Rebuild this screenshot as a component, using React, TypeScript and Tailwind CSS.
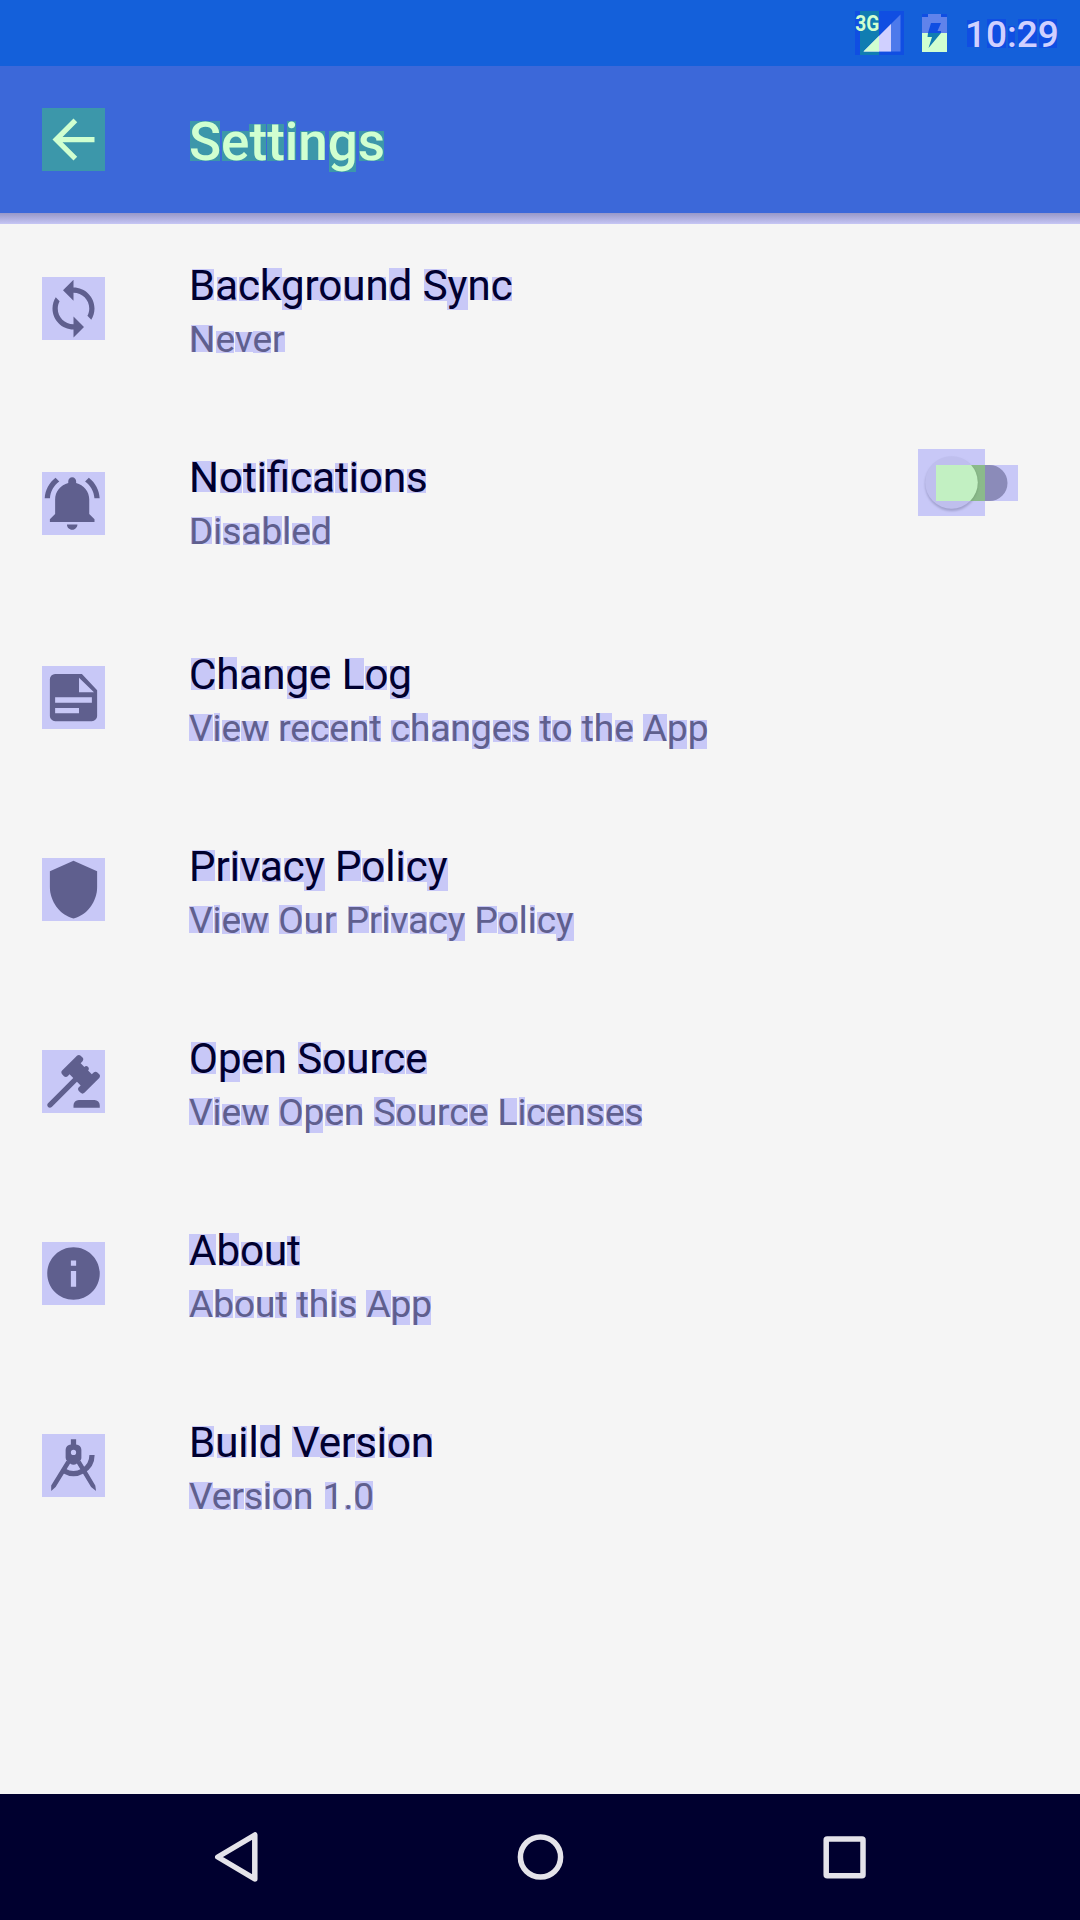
import type { CSSProperties, ReactNode } from "react";

const ctx = document.createElement("canvas").getContext("2d")!;

/** Measuring at a larger size gives fractional, unhinted glyph bounds. */
const PRECISION = 16;

/** Paints a tinted rectangle behind the ink bounds of every glyph. */
function glyphBackground(text: string, size: number, weight: number, tint: string): CSSProperties {
  ctx.font = `${weight} ${size}px Roboto`;
  const ascent = Math.round(ctx.measureText("x").fontBoundingBoxAscent);
  ctx.font = `${weight} ${size * PRECISION}px Roboto`;
  const images: string[] = [];
  const sizes: string[] = [];
  const positions: string[] = [];
  const clusters = text.match(/fi|./g) ?? [];
  let prefix = "";
  for (const glyph of clusters) {
    const m = ctx.measureText(glyph);
    const start = ctx.measureText(prefix + glyph).width - m.width;
    prefix += glyph;
    if (glyph === " ") continue;
    const left = Math.floor((start - m.actualBoundingBoxLeft) / PRECISION + 0.1);
    const right = Math.ceil((start + m.actualBoundingBoxRight) / PRECISION - 0.1);
    const top = ascent - Math.ceil(m.actualBoundingBoxAscent / PRECISION - 0.1);
    const bottom = ascent + Math.ceil(m.actualBoundingBoxDescent / PRECISION - 0.1);
    images.push(`linear-gradient(${tint}, ${tint})`);
    sizes.push(`${right - left}px ${bottom - top}px`);
    positions.push(`${left}px ${top}px`);
  }
  return {
    backgroundImage: images.join(","),
    backgroundSize: sizes.join(","),
    backgroundPosition: positions.join(","),
    backgroundRepeat: "no-repeat",
  };
}

type GlyphTextProps = { text: string; size: number; weight?: number; tint: string; className: string };

function GlyphText({ text, size, weight = 400, tint, className }: GlyphTextProps) {
  return (
    <span className={`block w-max whitespace-pre ${className}`} style={glyphBackground(text, size, weight, tint)}>
      {text}
    </span>
  );
}

function IconTile({ children, className }: { children: ReactNode; className: string }) {
  return (
    <div className={`size-[63px] shrink-0 ${className}`}>
      <svg viewBox="0 0 24 24" className="size-full" fill="currentColor">
        {children}
      </svg>
    </div>
  );
}

const syncIcon = (
  <path d="M12 4V1L8 5l4 4V6c3.31 0 6 2.69 6 6 0 1.01-.25 1.97-.7 2.8l1.46 1.46C19.54 15.03 20 13.57 20 12c0-4.42-3.58-8-8-8zm0 14c-3.31 0-6-2.69-6-6 0-1.01.25-1.97.7-2.8L5.24 7.74C4.46 8.97 4 10.43 4 12c0 4.42 3.58 8 8 8v3l4-4-4-4v3z" />
);
const bellIcon = (
  <path d="M6.58 3.58L5.15 2.15C2.76 3.97 1.18 6.8 1.03 10h2c.15-2.65 1.51-4.97 3.55-6.42zM19.97 10h2c-.15-3.2-1.73-6.03-4.13-7.85l-1.43 1.43c2.05 1.45 3.41 3.77 3.56 6.42zm-1.97.5c0-3.07-2.13-5.64-5-6.32V3.5c0-.83-.67-1.5-1.5-1.5S10 2.67 10 3.5v.68c-2.87.68-5 3.25-5 6.32V16l-2 2v1h17v-1l-2-2v-5.5zM11.5 22c.14 0 .27-.01.4-.04.65-.13 1.19-.58 1.44-1.18.1-.24.16-.5.16-.78h-4c0 1.1.9 2 2 2z" />
);
const documentIcon = (
  <path
    fillRule="evenodd"
    d="M5 3H15.2L21 9.2V19a2 2 0 0 1-2 2H5a2 2 0 0 1-2-2V5a2 2 0 0 1 2-2zM14.1 4.5V10h5.7zM5 11.9v2.1h14v-2.1zM5 16v2h9.1v-2z"
  />
);
const shieldIcon = <path d="M12 1L3 5v6c0 5.55 3.84 10.74 9 12 5.16-1.26 9-6.45 9-12V5z" />;
const gavelIcon = (
  <path d="M2.3,20.28L11.9,10.68L10.5,9.26L9.78,9.97C9.39,10.36 8.76,10.36 8.37,9.97L7.66,9.26C7.27,8.87 7.27,8.24 7.66,7.85L13.32,2.19C13.71,1.8 14.34,1.8 14.73,2.19L15.44,2.9C15.83,3.29 15.83,3.92 15.44,4.31L14.73,5L16.15,6.43C16.54,6.04 17.17,6.04 17.56,6.43C17.95,6.82 17.95,7.46 17.56,7.85L18.97,9.26L19.68,8.55C20.07,8.16 20.71,8.16 21.1,8.55L21.8,9.26C22.19,9.65 22.19,10.29 21.8,10.68L16.15,16.33C15.76,16.72 15.12,16.72 14.73,16.33L14.03,15.63C13.63,15.24 13.63,14.6 14.03,14.21L14.73,13.5L13.32,12.09L3.71,21.7C3.32,22.09 2.69,22.09 2.3,21.7C1.91,21.31 1.91,20.67 2.3,20.28M20,19A2,2 0 0,1 22,21V22H12V21A2,2 0 0,1 14,19H20Z" />
);
const infoIcon = (
  <path d="M12 2C6.48 2 2 6.48 2 12s4.48 10 10 10 10-4.48 10-10S17.52 2 12 2zm1 15h-2v-6h2v6zm0-8h-2V7h2v2z" />
);
const compassIcon = (
  <>
    <path
      fillRule="evenodd"
      d="M11 2h2v2a2 2 0 0 1 2 2v3c0 .5-.2.9-.5 1.2l-1.200 1a2.200 2.200 0 0 1-2.600 0l-1.200-1A2 2 0 0 1 9 9V6a2 2 0 0 1 2-2zM12 6a1 1 0 1 0 0 2 1 1 0 0 0 0-2z"
    />
    <path d="M9.300 10.200L3.500 19.600v2.100L5.200 20.200 11 10.800zM14.700 10.200L20.300 19.600l.3 2.100-1.900-1.500L13 10.800z" />
    <path d="M19.050 8A7.050 7.050 0 0 1 8.500 14.100" fill="none" stroke="currentColor" strokeWidth="2" />
  </>
);

type Item = { title: string; summary: string; icon: ReactNode; toggle?: boolean };

const items: Item[] = [
  { title: "Background Sync", summary: "Never", icon: syncIcon },
  { title: "Notifications", summary: "Disabled", icon: bellIcon, toggle: true },
  { title: "Change Log", summary: "View recent changes to the App", icon: documentIcon },
  { title: "Privacy Policy", summary: "View Our Privacy Policy", icon: shieldIcon },
  { title: "Open Source", summary: "View Open Source Licenses", icon: gavelIcon },
  { title: "About", summary: "About this App", icon: infoIcon },
  { title: "Build Version", summary: "Version 1.0", icon: compassIcon },
];

function Toggle() {
  return (
    <svg viewBox="0 0 100 67" className="mt-11 mr-[62px] ml-auto h-[67px] w-[100px] shrink-0">
      <defs>
        <clipPath id="overlap">
          <rect x="18" y="16" width="49" height="36" />
        </clipPath>
        <filter id="soft" x="-20%" y="-20%" width="140%" height="140%">
          <feGaussianBlur stdDeviation="1.3" />
        </filter>
      </defs>
      <rect width="67" height="67" fill="#c8c8f7" />
      <rect x="18" y="16" width="82" height="36" fill="#c8c8f7" />
      <path d="M67 16h4.500a18 18 0 0 1 0 36H67z" fill="#8b8bb9" />
      <circle cx="33.700" cy="35.300" r="26.600" fill="#a0a0ce" filter="url(#soft)" />
      <circle cx="33.500" cy="33.500" r="26.300" fill="#bfbfee" />
      <g clipPath="url(#overlap)">
        <rect x="18" y="16" width="49" height="36" fill="#8bba8b" />
        <circle cx="33.700" cy="34.500" r="26.600" fill="#7aa87a" filter="url(#soft)" />
        <circle cx="33.500" cy="33.500" r="26.300" fill="#c2f0c2" />
      </g>
    </svg>
  );
}

function SettingsRow({ item }: { item: Item }) {
  return (
    <li className={`flex items-start pl-[42px] ${item.toggle ? "h-[197px]" : "h-48"}`}>
      <IconTile className={`bg-[#c8c8f7] text-[#5f5f8e] ${item.toggle ? "mt-[67px]" : "mt-16"}`}>{item.icon}</IconTile>
      <div className="ml-21 flex flex-col gap-2 pt-12">
        <GlyphText text={item.title} size={42} tint="#c8c8f7" className="text-[42px] leading-[49px] text-[#00002f]" />
        <GlyphText
          text={item.summary}
          size={37}
          tint="#c8c8f7"
          className="text-[37px] leading-[43px] text-[#5f5f8e]"
        />
      </div>
      {item.toggle && <Toggle />}
    </li>
  );
}

function StatusBar() {
  return (
    <div className="flex h-[66px] items-start justify-end bg-[#1460da] pr-[21px]">
      <svg viewBox="0 0 49 44" className="mt-[11px] h-11 w-[49px] overflow-visible">
        <rect width="49" height="44" fill="#104ee2" />
        <rect x="5" width="19" height="44" fill="#107db2" />
        <path d="M8.500 40.500L45.500 3.500v37z" fill="#4d7aeb" />
        <path d="M8.500 40.500L36 13v27.500z" fill="#d0d0ff" />
        <path d="M8.500 40.500L24 25v15.500z" fill="#d0ffd0" />
        <text
          x="0.200"
          y="20.300"
          textLength="24"
          lengthAdjust="spacingAndGlyphs"
          fontFamily="Roboto, sans-serif"
          fontWeight="700"
          fontSize="22.500"
          fill="#d0ffd0"
        >
          3G
        </text>
      </svg>
      <svg viewBox="0 0 25 38" className="mt-3.5 ml-[18px] h-[38px] w-[25px]">
        <rect width="25" height="38" fill="#104ee2" />
        <path d="M6 0h13v3h6v16H0V3h6z" fill="#6083eb" />
        <path d="M0 19h25v19H0z" fill="#d0ffd0" />
        <path d="M9 9h10l-3.500 8H19v2H6z" fill="#104ee2" />
        <path d="M6 19h13L6.500 34l3.500-11H5.500z" fill="#107db2" />
      </svg>
      <div className="mt-[13px] ml-[18px] w-[94px]">
        <GlyphText
          text="10:29"
          size={37}
          weight={500}
          tint="#104ee2"
          className="text-[37px] leading-[43px] font-medium text-[#d0d0ff]"
        />
      </div>
    </div>
  );
}

function Toolbar() {
  return (
    <header className="relative flex h-[147px] items-start bg-[#3c68d9] pl-[42px]">
      <IconTile className="mt-[42px] bg-[#3c97aa] text-[#d0ffd0]">
        <path d="M20 11H7.830l5.590-5.590L12 4l-8 8 8 8 1.410-1.410L7.830 13H20v-2z" />
      </IconTile>
      <h1 className="mt-[45px] ml-21">
        <GlyphText
          text="Settings"
          size={53}
          weight={500}
          tint="#3c97aa"
          className="text-[53px] leading-[62px] font-medium text-[#d0ffd0]"
        />
      </h1>
      <div className="absolute inset-x-0 top-full h-[11px] bg-linear-to-b from-[#9898c8] to-[#c6c6f5]" />
    </header>
  );
}

function NavigationBar() {
  return (
    <nav className="flex h-[126px] items-center justify-between bg-[#00002f] px-[206px]">
      <svg viewBox="0 0 60 60" className="size-[60px]" fill="none" stroke="#e4e3ea" strokeWidth="5.500" strokeLinejoin="round">
        <path d="M11.800 30L48.800 8v44z" />
      </svg>
      <svg viewBox="0 0 60 60" className="size-[60px]" fill="none" stroke="#e4e3ea" strokeWidth="5.500">
        <circle cx="30.500" cy="30" r="20.100" />
      </svg>
      <svg viewBox="0 0 60 60" className="size-[60px]" fill="none" stroke="#e4e3ea" strokeWidth="5.500" strokeLinejoin="round">
        <rect x="12.200" y="12" width="36.800" height="36.800" rx="1" />
      </svg>
    </nav>
  );
}

export default function App() {
  return (
    <main className="flex h-[1920px] w-[1080px] flex-col overflow-hidden bg-[#f5f5f5] font-[Roboto,sans-serif]">
      <StatusBar />
      <Toolbar />
      <ul className="flex-1">
        {items.map((item) => (
          <SettingsRow key={item.title} item={item} />
        ))}
      </ul>
      <NavigationBar />
    </main>
  );
}
